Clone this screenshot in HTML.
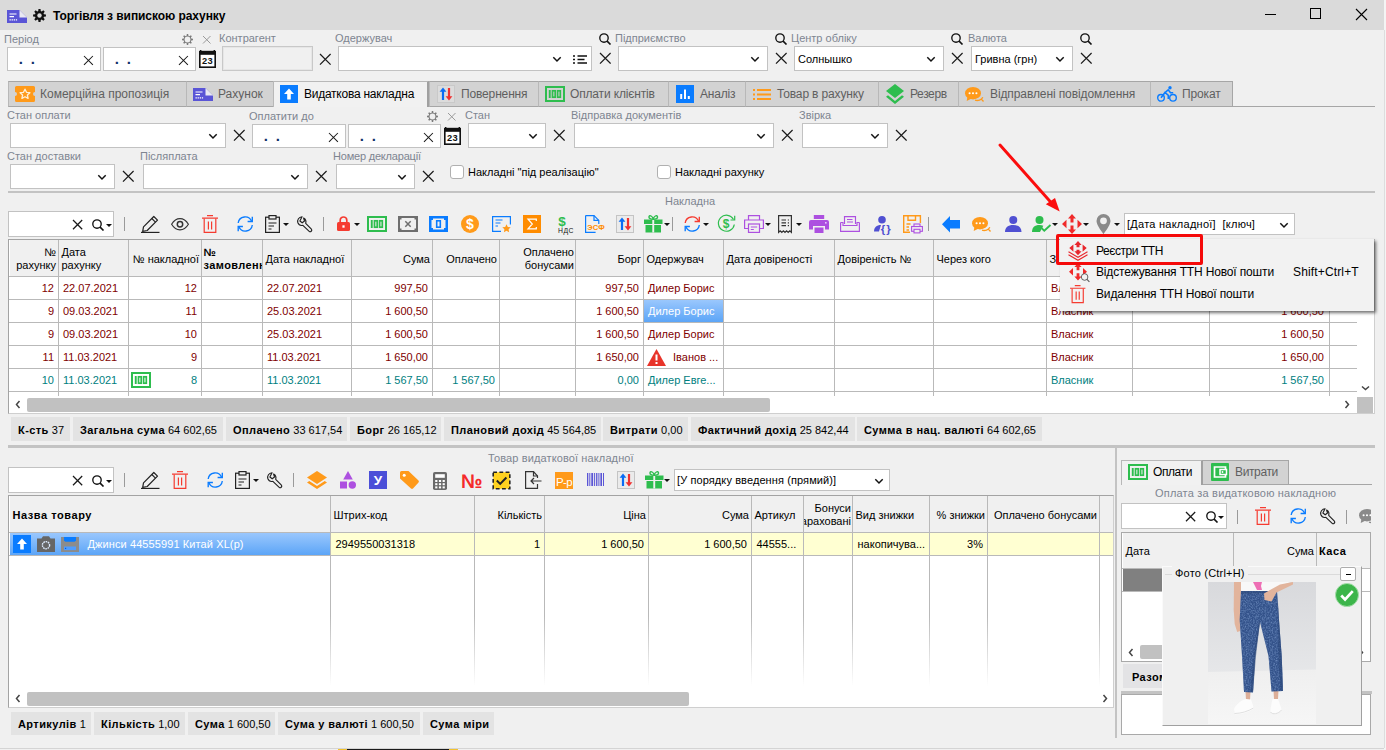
<!DOCTYPE html><html lang="uk"><head><meta charset="utf-8"><title>Торгівля з випискою рахунку</title><style>
*{box-sizing:border-box;margin:0;padding:0}
html,body{width:1386px;height:750px;overflow:hidden;background:#f0f0f0;font-family:"Liberation Sans",sans-serif;font-size:11px;color:#000}
#r{position:relative;width:1386px;height:750px;overflow:hidden}
#r div{position:absolute;white-space:nowrap}
.t{line-height:14px}
.lb{color:#7e8590;line-height:14px;font-size:11px}
.in{background:#fff;border:1px solid #c2c2c2}
.ind{background:#f0f0f0;border:1px solid #c8c8c8;box-shadow:inset 0 0 0 1px #e6e6e6}
.tab{background:#d3d3d3;border:1px solid #a6a6a6;border-left-color:#b8b8b8}
.taba{background:#f1f1f1;border:1px solid #b8b8b8;border-right:2px solid #a0a0a0;border-bottom:none}
.tt{font-size:12px;line-height:14px;color:#5f5f5f}
.ic svg{display:block;width:100%;height:100%;overflow:visible}
.g{font-size:11px;line-height:13px}
.gh{font-size:11px;line-height:13px;color:#000}
.sb{background:#e3e3e3;line-height:24px;height:24px;padding:0 7px;font-size:11px}
#r .sb b{letter-spacing:.42px}
.vl{background:#b9b9b9;width:1px}
.hl{background:#b9b9b9;height:1px}
.dot{font:bold 15px 'Liberation Sans',sans-serif;line-height:16px;color:#10306a}
</style></head><body><div id="r">
<div style="left:0px;top:0px;width:1386px;height:30px;background:#dadada"></div>
<div class="ic" style="left:7px;top:10px;width:20px;height:13px"><svg viewBox="0 0 20 13" preserveAspectRatio="none"><path d="M0 0h12.500L20 7.500V13H0z" fill="#5a55d6"/><path d="M12.500 0L20 7.500H12.500z" fill="#e9e9f2"/><path d="M2.500 4h7M2.500 6.700h4.500" stroke="#fff" stroke-width="1.200"/><path d="M2.500 9.800h8" stroke="#fff" stroke-width="1.200" stroke-dasharray="1.300 .8"/></svg></div>
<div class="ic" style="left:32.5px;top:8.5px;width:13px;height:13px"><svg viewBox="0 0 13 13" preserveAspectRatio="none"><path d="M10.92 5.22L12.92 5.48L12.92 7.52L10.92 7.78L10.53 8.72L11.76 10.32L10.32 11.76L8.72 10.53L7.78 10.92L7.52 12.92L5.48 12.92L5.22 10.92L4.28 10.53L2.68 11.76L1.24 10.32L2.47 8.72L2.08 7.78L0.08 7.52L0.08 5.48L2.08 5.22L2.47 4.28L1.24 2.68L2.68 1.24L4.28 2.47L5.22 2.08L5.48 0.08L7.52 0.08L7.78 2.08L8.72 2.47L10.32 1.24L11.76 2.68L10.53 4.28z" fill="#111"/><circle cx="6.500" cy="6.500" r="2.200" fill="#dadada"/></svg></div>
<div class="t" style="left:53px;top:8.9px;font-weight:bold;font-size:12px;letter-spacing:-0.07px">Торгівля з випискою рахунку</div>
<svg style="position:absolute;left:1250px;top:0" width="136" height="30" viewBox="0 0 136 30"><g stroke="#000" stroke-width="1" fill="none" shape-rendering="crispEdges"><path d="M14.5 14.5h11"/><rect x="60.5" y="8.5" width="10" height="10"/></g><path d="M106 9l11 11M117 9l-11 11" stroke="#000" stroke-width="1.1" fill="none"/></svg>
<div class="lb" style="left:4px;top:32px;">Період</div>
<div class="ic" style="left:182.0px;top:34.0px;width:11px;height:11px"><svg viewBox="0 0 11 11" preserveAspectRatio="none"><path d="M9.29 4.59L10.96 4.81L10.96 6.19L9.29 6.41L8.83 7.54L9.85 8.87L8.87 9.85L7.54 8.83L6.41 9.29L6.19 10.96L4.81 10.96L4.59 9.29L3.46 8.83L2.13 9.85L1.15 8.87L2.17 7.54L1.71 6.41L0.04 6.19L0.04 4.81L1.71 4.59L2.17 3.46L1.15 2.13L2.13 1.15L3.46 2.17L4.59 1.71L4.81 0.04L6.19 0.04L6.41 1.71L7.54 2.17L8.87 1.15L9.85 2.13L8.83 3.46z" fill="#7a7a7a"/><circle cx="5.500" cy="5.500" r="2.900" fill="#f0f0f0"/></svg></div>
<svg style="position:absolute;left:202.25px;top:35.25px" width="9.5" height="9.5" viewBox="-4.75 -4.75 9.5 9.5"><path d="M-3.75 -3.75L3.75 3.75M3.75 -3.75L-3.75 3.75" stroke="#9a9a9a" stroke-width="1" fill="none"/></svg>
<div class="in" style="left:7px;top:47px;width:94px;height:24px;"></div>
<div class="dot" style="left:18.7px;top:51px;">.</div>
<div class="dot" style="left:30.7px;top:51px;">.</div>
<svg style="position:absolute;left:83.14999999999999px;top:54.849999999999994px" width="10.9" height="10.9" viewBox="-5.45 -5.45 10.9 10.9"><path d="M-4.45 -4.45L4.45 4.45M4.45 -4.45L-4.45 4.45" stroke="#1a1a1a" stroke-width="1.05" fill="none"/></svg>
<div class="in" style="left:103px;top:47px;width:93px;height:24px;"></div>
<div class="dot" style="left:114.7px;top:51px;">.</div>
<div class="dot" style="left:126.7px;top:51px;">.</div>
<svg style="position:absolute;left:178.15px;top:54.849999999999994px" width="10.9" height="10.9" viewBox="-5.45 -5.45 10.9 10.9"><path d="M-4.45 -4.45L4.45 4.45M4.45 -4.45L-4.45 4.45" stroke="#1a1a1a" stroke-width="1.05" fill="none"/></svg>
<div class="ic" style="left:199px;top:50px;width:17px;height:18px"><svg viewBox="0 0 17 18" preserveAspectRatio="none"><rect x=".800" y="2" width="15.400" height="15.200" fill="#fff" stroke="#111" stroke-width="1.600"/><rect x="0" y=".800" width="17" height="4" fill="#111"/><rect x="1" y="0" width="1.400" height="2" fill="#111"/><rect x="14.600" y="0" width="1.400" height="2" fill="#111"/><text x="8.600" y="14.300" font-family="Liberation Sans,sans-serif" font-size="9.300" font-weight="bold" text-anchor="middle" fill="#111" letter-spacing=".3">23</text></svg></div>
<div class="lb" style="left:219px;top:31.200000000000003px;">Контрагент</div>
<div class="ind" style="left:222px;top:46px;width:91px;height:25px;"></div>
<svg style="position:absolute;left:319.2px;top:53.2px" width="12.6" height="12.6" viewBox="-6.3 -6.3 12.6 12.6"><path d="M-5.3 -5.3L5.3 5.3M5.3 -5.3L-5.3 5.3" stroke="#1a1a1a" stroke-width="1.25" fill="none"/></svg>
<div class="lb" style="left:335px;top:31.200000000000003px;">Одержувач</div>
<div class="in" style="left:338px;top:46px;width:254px;height:25px;"></div>
<svg style="position:absolute;left:552px;top:55.0px" width="10" height="8" viewBox="-5 -4 10 8"><path d="M-3.700 -1.700L0 2L3.700 -1.700" stroke="#111" stroke-width="1.500" fill="none"/></svg>
<svg style="position:absolute;left:598.7px;top:52.2px" width="12.6" height="12.6" viewBox="-6.3 -6.3 12.6 12.6"><path d="M-5.3 -5.3L5.3 5.3M5.3 -5.3L-5.3 5.3" stroke="#1a1a1a" stroke-width="1.25" fill="none"/></svg>
<div class="ic" style="left:573px;top:55px;width:14px;height:9px"><svg viewBox="0 0 14 9" preserveAspectRatio="none"><g stroke="#111" stroke-width="1.700"><path d="M0 1h2M4.500 1H14M0 4.500h2M4.500 4.500H11.500M0 8h2M4.500 8H14"/></g></svg></div>
<div class="ic" style="left:599.0px;top:33.1px;width:12px;height:12px"><svg viewBox="0 0 12 12" preserveAspectRatio="none"><circle cx="5" cy="5" r="4.200" fill="none" stroke="#111" stroke-width="1.350"/><path d="M8.100 8.100L11.500 11.500" stroke="#111" stroke-width="1.650"/></svg></div>
<div class="lb" style="left:615px;top:31.200000000000003px;">Підприємство</div>
<div class="in" style="left:618px;top:46px;width:150px;height:25px;"></div>
<svg style="position:absolute;left:750px;top:55.0px" width="10" height="8" viewBox="-5 -4 10 8"><path d="M-3.700 -1.700L0 2L3.700 -1.700" stroke="#111" stroke-width="1.500" fill="none"/></svg>
<svg style="position:absolute;left:774.7px;top:52.2px" width="12.6" height="12.6" viewBox="-6.3 -6.3 12.6 12.6"><path d="M-5.3 -5.3L5.3 5.3M5.3 -5.3L-5.3 5.3" stroke="#1a1a1a" stroke-width="1.25" fill="none"/></svg>
<div class="ic" style="left:775.0px;top:33.1px;width:12px;height:12px"><svg viewBox="0 0 12 12" preserveAspectRatio="none"><circle cx="5" cy="5" r="4.200" fill="none" stroke="#111" stroke-width="1.350"/><path d="M8.100 8.100L11.500 11.500" stroke="#111" stroke-width="1.650"/></svg></div>
<div class="lb" style="left:791px;top:31.200000000000003px;">Центр обліку</div>
<div class="in" style="left:794px;top:46px;width:150px;height:25px;"></div>
<div class="t" style="left:798px;top:52px;">Солнышко</div>
<svg style="position:absolute;left:926px;top:55.0px" width="10" height="8" viewBox="-5 -4 10 8"><path d="M-3.700 -1.700L0 2L3.700 -1.700" stroke="#111" stroke-width="1.500" fill="none"/></svg>
<svg style="position:absolute;left:950.7px;top:52.2px" width="12.6" height="12.6" viewBox="-6.3 -6.3 12.6 12.6"><path d="M-5.3 -5.3L5.3 5.3M5.3 -5.3L-5.3 5.3" stroke="#1a1a1a" stroke-width="1.25" fill="none"/></svg>
<div class="ic" style="left:951.0px;top:33.1px;width:12px;height:12px"><svg viewBox="0 0 12 12" preserveAspectRatio="none"><circle cx="5" cy="5" r="4.200" fill="none" stroke="#111" stroke-width="1.350"/><path d="M8.100 8.100L11.500 11.500" stroke="#111" stroke-width="1.650"/></svg></div>
<div class="lb" style="left:968px;top:31.200000000000003px;">Валюта</div>
<div class="in" style="left:971px;top:46px;width:102px;height:25px;"></div>
<div class="t" style="left:975px;top:52px;">Гривна (грн)</div>
<svg style="position:absolute;left:1055px;top:55.0px" width="10" height="8" viewBox="-5 -4 10 8"><path d="M-3.700 -1.700L0 2L3.700 -1.700" stroke="#111" stroke-width="1.500" fill="none"/></svg>
<svg style="position:absolute;left:1079.7px;top:52.2px" width="12.6" height="12.6" viewBox="-6.3 -6.3 12.6 12.6"><path d="M-5.3 -5.3L5.3 5.3M5.3 -5.3L-5.3 5.3" stroke="#1a1a1a" stroke-width="1.25" fill="none"/></svg>
<div class="ic" style="left:1080.0px;top:33.1px;width:12px;height:12px"><svg viewBox="0 0 12 12" preserveAspectRatio="none"><circle cx="5" cy="5" r="4.200" fill="none" stroke="#111" stroke-width="1.350"/><path d="M8.100 8.100L11.500 11.500" stroke="#111" stroke-width="1.650"/></svg></div>
<div style="left:8px;top:106px;width:1367px;height:1px;background:#a6a6a6"></div>
<div class="tab" style="left:8px;top:81px;width:179px;height:26px;"></div>
<div class="ic" style="left:15.0px;top:86.0px;width:20px;height:16px"><svg viewBox="0 0 20 16" preserveAspectRatio="none"><path d="M0 1.500A1.500 1.500 0 0 1 1.500 0h17A1.500 1.500 0 0 1 20 1.500V6a2 2 0 0 0 0 4v4.500a1.500 1.500 0 0 1-1.500 1.500h-17A1.500 1.500 0 0 1 0 14.500V10a2 2 0 0 0 0-4z" fill="#ff9a1a"/><path d="M10 3.200l1.500 3.100 3.400.4-2.500 2.300.7 3.400-3.100-1.700-3.100 1.700.7-3.400L5.100 6.700l3.400-.4z" fill="none" stroke="#fff0d8" stroke-width="1.300" stroke-linejoin="round"/></svg></div>
<div class="tt" style="left:40px;top:87px;">Комерційна пропозиція</div>
<div class="tab" style="left:186px;top:81px;width:88px;height:26px;"></div>
<div class="ic" style="left:193.0px;top:87.5px;width:20px;height:13px"><svg viewBox="0 0 20 13" preserveAspectRatio="none"><path d="M0 0h12.500L20 7.500V13H0z" fill="#5a55d6"/><path d="M12.500 0L20 7.500H12.500z" fill="#e9e9f2"/><path d="M2.500 4h7M2.500 6.700h4.500" stroke="#fff" stroke-width="1.200"/><path d="M2.500 9.800h8" stroke="#fff" stroke-width="1.200" stroke-dasharray="1.300 .8"/></svg></div>
<div class="tt" style="left:218px;top:87px;">Рахунок</div>
<div class="taba" style="left:273px;top:81px;width:156px;height:26px;"></div>
<div class="ic" style="left:280px;top:85.0px;width:18px;height:18px"><svg viewBox="0 0 18 18" preserveAspectRatio="none"><rect width="18" height="18" fill="#0a7cff"/><path d="M9 3.500l5 5.500h-3.200v5.500H7.200V9H4z" fill="#fff"/></svg></div>
<div class="tt" style="left:304px;top:87px;color:#000;letter-spacing:-0.25px;">Видаткова накладна</div>
<div class="tab" style="left:429px;top:81px;width:110px;height:26px;"></div>
<div class="ic" style="left:437.0px;top:85.0px;width:18px;height:18px"><svg viewBox="0 0 18 18" preserveAspectRatio="none"><rect x=".5" y=".5" width="17" height="17" fill="#dcdcdc" stroke="#c9c9c9"/><path d="M6 2.500l3.400 4.300H7.100V15H4.900V6.800H2.600z" fill="#0a6cf5"/><path d="M12 15.500l3.400-4.300h-2.300V3h-2.200v8.200H8.600z" fill="#f03030"/></svg></div>
<div class="tt" style="left:461px;top:87px;letter-spacing:-0.15px;">Повернення</div>
<div class="tab" style="left:538px;top:81px;width:131px;height:26px;"></div>
<div class="ic" style="left:545.0px;top:86.0px;width:20px;height:16px"><svg viewBox="0 0 20 16" preserveAspectRatio="none"><rect x="1" y="1" width="18" height="14" fill="none" stroke="#2ebd4e" stroke-width="2"/><rect x="3.800" y="4" width="1.900" height="8" fill="#2ebd4e"/><rect x="7.500" y="4.800" width="2.700" height="6.400" fill="none" stroke="#2ebd4e" stroke-width="1.700"/><rect x="12.600" y="4.800" width="2.700" height="6.400" fill="none" stroke="#2ebd4e" stroke-width="1.700"/></svg></div>
<div class="tt" style="left:570px;top:87px;letter-spacing:-0.16px;">Оплати клієнтів</div>
<div class="tab" style="left:668px;top:81px;width:78px;height:26px;"></div>
<div class="ic" style="left:676.0px;top:85.0px;width:18px;height:18px"><svg viewBox="0 0 18 18" preserveAspectRatio="none"><rect width="18" height="18" fill="#0a7cff"/><path d="M5.200 9v5M9 4.500v9.500M12.800 11v3" stroke="#fff" stroke-width="2"/></svg></div>
<div class="tt" style="left:700px;top:87px;letter-spacing:-0.2px;">Аналіз</div>
<div class="tab" style="left:745px;top:81px;width:134px;height:26px;"></div>
<div class="ic" style="left:753.0px;top:88.5px;width:18px;height:11px"><svg viewBox="0 0 18 11" preserveAspectRatio="none"><g stroke="#ff9a1a" stroke-width="1.900"><path d="M0 1h2M4 1H18M0 5.500h2M4 5.500H18M0 10h2M4 10H18"/></g></svg></div>
<div class="tt" style="left:777px;top:87px;letter-spacing:-0.15px;">Товар в рахунку</div>
<div class="tab" style="left:878px;top:81px;width:81px;height:26px;"></div>
<div class="ic" style="left:886.0px;top:84.0px;width:18px;height:20px"><svg viewBox="0 0 18 20" preserveAspectRatio="none"><path d="M9 0l9 7-9 7-9-7z" fill="#2ebd4e"/><path d="M2 11.200L0 12.800 9 20l9-7.200-2-1.600L9 17z" fill="#2ebd4e"/></svg></div>
<div class="tt" style="left:910px;top:87px;letter-spacing:-0.38px;">Резерв</div>
<div class="tab" style="left:958px;top:81px;width:193px;height:26px;"></div>
<div class="ic" style="left:965.0px;top:86.5px;width:20px;height:15px"><svg viewBox="0 0 20 15" preserveAspectRatio="none"><ellipse cx="8" cy="6.200" rx="8" ry="6.200" fill="#ff9a1a"/><path d="M2.500 9.500l-.8 4.500 5-2.500z" fill="#ff9a1a"/><circle cx="4.600" cy="6.200" r="1.050" fill="#fff"/><circle cx="8" cy="6.200" r="1.050" fill="#fff"/><circle cx="11.400" cy="6.200" r="1.050" fill="#fff"/><path d="M10 13.200c3 .9 6.500-.2 7.800-3M18.500 14.500l-2-2.200" fill="none" stroke="#ff9a1a" stroke-width="1.300"/></svg></div>
<div class="tt" style="left:990px;top:87px;letter-spacing:-0.1px;">Відправлені повідомлення</div>
<div class="tab" style="left:1150px;top:81px;width:83px;height:26px;"></div>
<div class="ic" style="left:1157.0px;top:86.0px;width:20px;height:16px"><svg viewBox="0 0 20 16" preserveAspectRatio="none"><circle cx="4" cy="11.800" r="3.300" fill="none" stroke="#0a7cff" stroke-width="1.400"/><circle cx="16" cy="11.800" r="3.300" fill="none" stroke="#0a7cff" stroke-width="1.400"/><path d="M4 11.800l4-5.300 3.300 2.800v3.700M8 6.500l3.200-2.700 2.300 2.900h2.700" fill="none" stroke="#0a7cff" stroke-width="1.600"/><circle cx="13" cy="1.700" r="1.700" fill="#0a7cff"/></svg></div>
<div class="tt" style="left:1182px;top:87px;letter-spacing:-0.15px;">Прокат</div>
<div class="lb" style="left:7px;top:107.7px;">Стан оплати</div>
<div class="in" style="left:10px;top:123px;width:216px;height:25px;"></div>
<svg style="position:absolute;left:208px;top:132.0px" width="10" height="8" viewBox="-5 -4 10 8"><path d="M-3.700 -1.700L0 2L3.700 -1.700" stroke="#111" stroke-width="1.500" fill="none"/></svg>
<svg style="position:absolute;left:232.7px;top:129.2px" width="12.6" height="12.6" viewBox="-6.3 -6.3 12.6 12.6"><path d="M-5.3 -5.3L5.3 5.3M5.3 -5.3L-5.3 5.3" stroke="#1a1a1a" stroke-width="1.25" fill="none"/></svg>
<div class="lb" style="left:249px;top:108.7px;">Оплатити до</div>
<div class="ic" style="left:427.0px;top:111.0px;width:11px;height:11px"><svg viewBox="0 0 11 11" preserveAspectRatio="none"><path d="M9.29 4.59L10.96 4.81L10.96 6.19L9.29 6.41L8.83 7.54L9.85 8.87L8.87 9.85L7.54 8.83L6.41 9.29L6.19 10.96L4.81 10.96L4.59 9.29L3.46 8.83L2.13 9.85L1.15 8.87L2.17 7.54L1.71 6.41L0.04 6.19L0.04 4.81L1.71 4.59L2.17 3.46L1.15 2.13L2.13 1.15L3.46 2.17L4.59 1.71L4.81 0.04L6.19 0.04L6.41 1.71L7.54 2.17L8.87 1.15L9.85 2.13L8.83 3.46z" fill="#7a7a7a"/><circle cx="5.500" cy="5.500" r="2.900" fill="#f0f0f0"/></svg></div>
<svg style="position:absolute;left:447.25px;top:112.25px" width="9.5" height="9.5" viewBox="-4.75 -4.75 9.5 9.5"><path d="M-3.75 -3.75L3.75 3.75M3.75 -3.75L-3.75 3.75" stroke="#9a9a9a" stroke-width="1" fill="none"/></svg>
<div class="in" style="left:252px;top:124px;width:94px;height:24px;"></div>
<div class="dot" style="left:263.7px;top:128px;">.</div>
<div class="dot" style="left:275.7px;top:128px;">.</div>
<svg style="position:absolute;left:328.15000000000003px;top:131.85000000000002px" width="10.9" height="10.9" viewBox="-5.45 -5.45 10.9 10.9"><path d="M-4.45 -4.45L4.45 4.45M4.45 -4.45L-4.45 4.45" stroke="#1a1a1a" stroke-width="1.05" fill="none"/></svg>
<div class="in" style="left:348px;top:124px;width:93px;height:24px;"></div>
<div class="dot" style="left:359.7px;top:128px;">.</div>
<div class="dot" style="left:371.7px;top:128px;">.</div>
<svg style="position:absolute;left:423.15000000000003px;top:131.85000000000002px" width="10.9" height="10.9" viewBox="-5.45 -5.45 10.9 10.9"><path d="M-4.45 -4.45L4.45 4.45M4.45 -4.45L-4.45 4.45" stroke="#1a1a1a" stroke-width="1.05" fill="none"/></svg>
<div class="ic" style="left:444px;top:127px;width:17px;height:18px"><svg viewBox="0 0 17 18" preserveAspectRatio="none"><rect x=".800" y="2" width="15.400" height="15.200" fill="#fff" stroke="#111" stroke-width="1.600"/><rect x="0" y=".800" width="17" height="4" fill="#111"/><rect x="1" y="0" width="1.400" height="2" fill="#111"/><rect x="14.600" y="0" width="1.400" height="2" fill="#111"/><text x="8.600" y="14.300" font-family="Liberation Sans,sans-serif" font-size="9.300" font-weight="bold" text-anchor="middle" fill="#111" letter-spacing=".3">23</text></svg></div>
<div class="lb" style="left:465px;top:107.7px;">Стан</div>
<div class="in" style="left:468px;top:123px;width:78px;height:25px;"></div>
<svg style="position:absolute;left:528px;top:132.0px" width="10" height="8" viewBox="-5 -4 10 8"><path d="M-3.700 -1.700L0 2L3.700 -1.700" stroke="#111" stroke-width="1.500" fill="none"/></svg>
<svg style="position:absolute;left:552.7px;top:129.2px" width="12.6" height="12.6" viewBox="-6.3 -6.3 12.6 12.6"><path d="M-5.3 -5.3L5.3 5.3M5.3 -5.3L-5.3 5.3" stroke="#1a1a1a" stroke-width="1.25" fill="none"/></svg>
<div class="lb" style="left:571px;top:107.7px;">Відправка документів</div>
<div class="in" style="left:574px;top:123px;width:200px;height:25px;"></div>
<svg style="position:absolute;left:756px;top:132.0px" width="10" height="8" viewBox="-5 -4 10 8"><path d="M-3.700 -1.700L0 2L3.700 -1.700" stroke="#111" stroke-width="1.500" fill="none"/></svg>
<svg style="position:absolute;left:780.7px;top:129.2px" width="12.6" height="12.6" viewBox="-6.3 -6.3 12.6 12.6"><path d="M-5.3 -5.3L5.3 5.3M5.3 -5.3L-5.3 5.3" stroke="#1a1a1a" stroke-width="1.25" fill="none"/></svg>
<div class="lb" style="left:799px;top:107.7px;">Звірка</div>
<div class="in" style="left:802px;top:123px;width:86px;height:25px;"></div>
<svg style="position:absolute;left:870px;top:132.0px" width="10" height="8" viewBox="-5 -4 10 8"><path d="M-3.700 -1.700L0 2L3.700 -1.700" stroke="#111" stroke-width="1.500" fill="none"/></svg>
<svg style="position:absolute;left:894.7px;top:129.2px" width="12.6" height="12.6" viewBox="-6.3 -6.3 12.6 12.6"><path d="M-5.3 -5.3L5.3 5.3M5.3 -5.3L-5.3 5.3" stroke="#1a1a1a" stroke-width="1.25" fill="none"/></svg>
<div class="lb" style="left:7px;top:149px;">Стан доставки</div>
<div class="in" style="left:10px;top:164px;width:105px;height:25px;"></div>
<svg style="position:absolute;left:97px;top:173.0px" width="10" height="8" viewBox="-5 -4 10 8"><path d="M-3.700 -1.700L0 2L3.700 -1.700" stroke="#111" stroke-width="1.500" fill="none"/></svg>
<svg style="position:absolute;left:121.7px;top:170.2px" width="12.6" height="12.6" viewBox="-6.3 -6.3 12.6 12.6"><path d="M-5.3 -5.3L5.3 5.3M5.3 -5.3L-5.3 5.3" stroke="#1a1a1a" stroke-width="1.25" fill="none"/></svg>
<div class="lb" style="left:140px;top:149px;">Післяплата</div>
<div class="in" style="left:143px;top:164px;width:165px;height:25px;"></div>
<svg style="position:absolute;left:290px;top:173.0px" width="10" height="8" viewBox="-5 -4 10 8"><path d="M-3.700 -1.700L0 2L3.700 -1.700" stroke="#111" stroke-width="1.500" fill="none"/></svg>
<svg style="position:absolute;left:314.7px;top:170.2px" width="12.6" height="12.6" viewBox="-6.3 -6.3 12.6 12.6"><path d="M-5.3 -5.3L5.3 5.3M5.3 -5.3L-5.3 5.3" stroke="#1a1a1a" stroke-width="1.25" fill="none"/></svg>
<div class="lb" style="left:333px;top:149px;letter-spacing:-.2px">Номер декларації</div>
<div class="in" style="left:336px;top:164px;width:79px;height:25px;"></div>
<svg style="position:absolute;left:397px;top:173.0px" width="10" height="8" viewBox="-5 -4 10 8"><path d="M-3.700 -1.700L0 2L3.700 -1.700" stroke="#111" stroke-width="1.500" fill="none"/></svg>
<svg style="position:absolute;left:421.7px;top:170.2px" width="12.6" height="12.6" viewBox="-6.3 -6.3 12.6 12.6"><path d="M-5.3 -5.3L5.3 5.3M5.3 -5.3L-5.3 5.3" stroke="#1a1a1a" stroke-width="1.25" fill="none"/></svg>
<div style="left:450px;top:165px;width:14px;height:14px;background:#fff;border:1px solid #b0b0b0;border-radius:3px"></div>
<div class="t" style="left:468px;top:165px;">Накладні "під реалізацію"</div>
<div style="left:657px;top:165px;width:14px;height:14px;background:#fff;border:1px solid #b0b0b0;border-radius:3px"></div>
<div class="t" style="left:675px;top:165px;">Накладні рахунку</div>
<div style="left:8px;top:191px;width:1367px;height:2px;background:#c3c3c3"></div>
<div class="lb" style="left:665px;top:194px;">Накладна</div>
<div class="in" style="left:8px;top:211px;width:106px;height:26px;"></div>
<svg style="position:absolute;left:72.4px;top:218.9px" width="11.2" height="11.2" viewBox="-5.6 -5.6 11.2 11.2"><path d="M-4.6 -4.6L4.6 4.6M4.6 -4.6L-4.6 4.6" stroke="#1a1a1a" stroke-width="1.25" fill="none"/></svg>
<div class="ic" style="left:92.0px;top:218.5px;width:12px;height:12px"><svg viewBox="0 0 12 12" preserveAspectRatio="none"><circle cx="5" cy="5" r="4.200" fill="none" stroke="#111" stroke-width="1.350"/><path d="M8.100 8.100L11.500 11.500" stroke="#111" stroke-width="1.650"/></svg></div>
<svg style="position:absolute;left:105.5px;top:224.0px" width="6" height="3" viewBox="0 0 6 3"><path d="M0 0h6L3 3z" fill="#111"/></svg>
<div style="left:124px;top:217px;width:1px;height:14px;background:#9a9a9a"></div>
<div class="ic" style="left:141px;top:215px;width:18.5px;height:18px"><svg viewBox="0 0 18.5 18" preserveAspectRatio="none"><path d="M2.500 11.800L12.800 1.500l3.700 3.700L6.200 15.500l-4.500.8z" fill="none" stroke="#222" stroke-width="1.200" stroke-linejoin="round"/><path d="M10.800 3.500l3.700 3.700" stroke="#222" stroke-width="1.100"/><path d="M0 17.400h18.500" stroke="#222" stroke-width="1.150"/></svg></div>
<div class="ic" style="left:171px;top:217.8px;width:18px;height:12.5px"><svg viewBox="0 0 18 12.5" preserveAspectRatio="none"><path d="M.6 6.250C3 2.300 5.800.6 9 .6s6 1.700 8.400 5.650C15 10.200 12.200 11.900 9 11.900S3 10.200.6 6.250z" fill="none" stroke="#333" stroke-width="1.150"/><circle cx="9" cy="6.250" r="2.700" fill="none" stroke="#333" stroke-width="1.500"/></svg></div>
<div class="ic" style="left:202px;top:214.8px;width:16px;height:18px"><svg viewBox="0 0 16 18" preserveAspectRatio="none"><path d="M0 3.200h16M5 .600h6" fill="none" stroke="#f53b30" stroke-width="1.200"/><path d="M2.200 3.500v13.900h11.600V3.500" fill="none" stroke="#f53b30" stroke-width="1.200"/><path d="M6.400 6.500v8M9.600 6.500v8" stroke="#f53b30" stroke-width="1.200"/></svg></div>
<div class="ic" style="left:236.8px;top:216px;width:16.5px;height:16px"><svg viewBox="0 0 16.5 16" preserveAspectRatio="none"><path d="M1.200 7A7 7 0 0 1 14.600 5.200" fill="none" stroke="#0a7cff" stroke-width="1.350"/><path d="M15.300 .8v4.700h-4.700" fill="none" stroke="#0a7cff" stroke-width="1.350"/><path d="M15.300 9A7 7 0 0 1 1.900 10.800" fill="none" stroke="#0a7cff" stroke-width="1.350"/><path d="M1.200 15.200v-4.700h4.700" fill="none" stroke="#0a7cff" stroke-width="1.350"/></svg></div>
<div class="ic" style="left:264.7px;top:215px;width:15px;height:18px"><svg viewBox="0 0 15 18" preserveAspectRatio="none"><rect x=".6" y="2.200" width="13.800" height="15.200" fill="none" stroke="#222" stroke-width="1.200"/><rect x="4" y=".600" width="7" height="3.400" fill="#f0f0f0" stroke="#222" stroke-width="1.200"/><path d="M3.500 8h8M3.500 11h5.500M3.500 14h3" stroke="#222" stroke-width="1.150"/></svg></div>
<div class="ic" style="left:296.8px;top:216px;width:16.5px;height:16px"><svg viewBox="0 0 16.5 16" preserveAspectRatio="none"><path d="M5 .700A4.600 4.600 0 0 0 .9 6.800c.8 2 3 3 5 2.500l6.300 6c1.300 1.200 3.400-.7 2.200-2.100L8.700 7.300c.6-2.100-.3-4.200-2.100-5.200l.9 2.900-2.300 1.800-2.300-1.800z" fill="none" stroke="#222" stroke-width="1.150" stroke-linejoin="round"/></svg></div>
<div class="ic" style="left:336.5px;top:216px;width:13px;height:15px"><svg viewBox="0 0 13 15" preserveAspectRatio="none"><path d="M3.200 6.500V4.300a3.300 3.300 0 0 1 6.600 0v2.200" fill="none" stroke="#f53b30" stroke-width="1.700"/><rect x="0" y="6" width="13" height="9" rx="1.500" fill="#f53b30"/><rect x="5.400" y="9.300" width="2.200" height="2.400" fill="#fff"/></svg></div>
<div class="ic" style="left:367px;top:216px;width:20px;height:16px"><svg viewBox="0 0 20 16" preserveAspectRatio="none"><rect x="1" y="1" width="18" height="14" fill="none" stroke="#2ebd4e" stroke-width="2"/><rect x="3.800" y="4" width="1.900" height="8" fill="#2ebd4e"/><rect x="7.500" y="4.800" width="2.700" height="6.400" fill="none" stroke="#2ebd4e" stroke-width="1.700"/><rect x="12.600" y="4.800" width="2.700" height="6.400" fill="none" stroke="#2ebd4e" stroke-width="1.700"/></svg></div>
<div class="ic" style="left:398px;top:216px;width:20px;height:16px"><svg viewBox="0 0 20 16" preserveAspectRatio="none"><path d="M0 0h20v16H0z M2 3.500v9h1.500V14h13v-1.500H18v-9h-1.500V2h-13v1.500z" fill="#6e6e6e" fill-rule="evenodd"/><path d="M7.300 5.300l5.400 5.400M12.700 5.300l-5.400 5.400" stroke="#6e6e6e" stroke-width="1.500"/></svg></div>
<div class="ic" style="left:429px;top:216px;width:19px;height:16px"><svg viewBox="0 0 19 16" preserveAspectRatio="none"><path d="M0 0h19v16H0z M2.500 4v8h1.500v1.500h11V12h1.500V4H15V2.500H4V4z" fill="#0a7cff" fill-rule="evenodd"/><rect x="7.700" y="4.800" width="3.600" height="6.400" fill="none" stroke="#0a7cff" stroke-width="1.600"/></svg></div>
<div class="ic" style="left:461px;top:215px;width:18px;height:18px"><svg viewBox="0 0 18 18" preserveAspectRatio="none"><circle cx="9" cy="9" r="9" fill="#ff9a1a"/><text x="9" y="14" font-family="Liberation Sans,sans-serif" font-size="14" font-weight="bold" text-anchor="middle" fill="#fff">$</text></svg></div>
<div class="ic" style="left:491.7px;top:216px;width:19px;height:16px"><svg viewBox="0 0 19 16" preserveAspectRatio="none"><path d="M18.400 8.500V.600H.600v14.800H9" fill="none" stroke="#0a7cff" stroke-width="1.200"/><path d="M3.500 4h7M3.500 7h5M3.500 10h2.500" stroke="#0a7cff" stroke-width="1.200"/><path d="M14.500 8.200l1.300 2.700 2.900.4-2.100 2 .5 2.900-2.600-1.400-2.600 1.400.5-2.900-2.100-2 2.900-.4z" fill="#ff9a1a"/></svg></div>
<div class="ic" style="left:523px;top:215px;width:18px;height:18px"><svg viewBox="0 0 18 18" preserveAspectRatio="none"><rect width="18" height="18" fill="#ff8c00"/><path d="M13.300 6V4.200H5L9.300 9 5 13.800h8.300V12" fill="none" stroke="#fff" stroke-width="1.200"/></svg></div>
<div class="ic" style="left:556px;top:215px;width:18px;height:18px"><svg viewBox="0 0 18 18" preserveAspectRatio="none"><text x="6" y="11" font-family="Liberation Sans,sans-serif" font-size="13.500" font-weight="bold" text-anchor="middle" fill="#2ebd4e">$</text><text x="10" y="17.600" font-family="Liberation Sans,sans-serif" font-size="6.800" text-anchor="middle" fill="#111" letter-spacing=".5">НДС</text></svg></div>
<div class="ic" style="left:585px;top:215px;width:19px;height:18px"><svg viewBox="0 0 19 18" preserveAspectRatio="none"><path d="M.6 .600h8.400l4.800 4.800V9M.6 .600v16.800h10" fill="none" stroke="#0a7cff" stroke-width="1.200"/><path d="M9 .600v4.800h4.800" fill="none" stroke="#0a7cff" stroke-width="1.200"/><text x="11" y="14.800" font-family="Liberation Sans,sans-serif" font-size="7.600" font-weight="bold" text-anchor="middle" fill="#ff8c00">ЭСФ</text></svg></div>
<div class="ic" style="left:616px;top:215px;width:18px;height:18px"><svg viewBox="0 0 18 18" preserveAspectRatio="none"><rect x=".5" y=".5" width="17" height="17" fill="#ebebeb" stroke="#c4c4c4"/><path d="M6 2.500l3.400 4.300H7.100V15H4.900V6.800H2.600z" fill="#0a6cf5"/><path d="M12 15.500l3.400-4.300h-2.300V3h-2.200v8.200H8.600z" fill="#f03030"/></svg></div>
<div class="ic" style="left:643.8px;top:215.3px;width:18.5px;height:17.5px"><svg viewBox="0 0 18.5 17.5" preserveAspectRatio="none"><rect x="0" y="4.500" width="18.500" height="4.500" fill="#2ebd4e"/><rect x="1.500" y="10" width="15.500" height="7.500" fill="#2ebd4e"/><rect x="8.300" y="4.500" width="1.900" height="13" fill="#f0f0f0"/><path d="M9.250 4.300C7 4.300 4.500 3.500 5 1.600s3.700-.6 4.250 2.700C9.800 1 12.900-.3 13.500 1.600S11.500 4.300 9.250 4.300z" fill="none" stroke="#2ebd4e" stroke-width="1.400"/></svg></div>
<div class="ic" style="left:683.8px;top:216px;width:16.5px;height:16px"><svg viewBox="0 0 16.5 16" preserveAspectRatio="none"><path d="M1.200 7A7 7 0 0 1 14.600 5.200" fill="none" stroke="#f53b30" stroke-width="1.350"/><path d="M15.300 .8v4.700h-4.700" fill="none" stroke="#f53b30" stroke-width="1.350"/><path d="M15.300 9A7 7 0 0 1 1.900 10.800" fill="none" stroke="#0a7cff" stroke-width="1.350"/><path d="M1.200 15.200v-4.700h4.700" fill="none" stroke="#0a7cff" stroke-width="1.350"/></svg></div>
<div class="ic" style="left:717px;top:215.3px;width:18.5px;height:17.5px"><svg viewBox="0 0 18.5 17.5" preserveAspectRatio="none"><path d="M16.500 4.500A8 8 0 1 0 17.300 9.500" fill="none" stroke="#2ebd4e" stroke-width="1.200"/><path d="M17.700 .800v4.200h-4.200" fill="none" stroke="#2ebd4e" stroke-width="1.200"/><text x="9" y="13.300" font-family="Liberation Sans,sans-serif" font-size="12" font-weight="bold" text-anchor="middle" fill="#2ebd4e">$</text></svg></div>
<div class="ic" style="left:744px;top:215px;width:20px;height:18px"><svg viewBox="0 0 20 18" preserveAspectRatio="none"><path d="M4.500 5V.600h11V5" fill="none" stroke="#ad50e0" stroke-width="1.200"/><path d="M4.500 13.500H.600V5h18.800v8.500h-3.900" fill="none" stroke="#ad50e0" stroke-width="1.200"/><rect x="4.500" y="9" width="11" height="8.400" fill="none" stroke="#ad50e0" stroke-width="1.200"/><path d="M6.800 12h6.400M6.800 14.500h3" stroke="#ad50e0" stroke-width="1.100"/></svg></div>
<div class="ic" style="left:778px;top:215px;width:14px;height:18px"><svg viewBox="0 0 14 18" preserveAspectRatio="none"><path d="M.6 .600h12.800v16.800l-1.600-1.600-1.600 1.600-1.600-1.600-1.600 1.600-1.600-1.600-1.600 1.600-1.600-1.600-1.600 1.600z" fill="none" stroke="#333" stroke-width="1.200"/><path d="M3.500 5h4.500M3.500 7.800h4.500M3.500 10.600h4.500M9.800 7.800h1.200M9.800 10.600h1.200M9.800 5h1.200" stroke="#333" stroke-width="1.200"/></svg></div>
<div class="ic" style="left:809px;top:215px;width:20px;height:18px"><svg viewBox="0 0 20 18" preserveAspectRatio="none"><rect x="4.800" y="0" width="10.400" height="4" fill="#ad50e0"/><path d="M2 5h16a2 2 0 0 1 2 2v7.500h-4V11H4v3.500H0V7a2 2 0 0 1 2-2z" fill="#ad50e0"/><rect x="5.500" y="12.500" width="9" height="5.500" fill="#ad50e0"/><rect x="16" y="7" width="1.600" height="1.600" fill="#e8c8ff"/></svg></div>
<div class="ic" style="left:840px;top:216px;width:20px;height:16px"><svg viewBox="0 0 20 16" preserveAspectRatio="none"><path d="M4.500 8V.600h11V8" fill="none" stroke="#ad50e0" stroke-width="1.150"/><path d="M7 3.500h5.500M7 6h6" stroke="#ad50e0" stroke-width="1.100"/><path d="M.6 6.500v8.900h18.800V6.500" fill="none" stroke="#ad50e0" stroke-width="1.150"/><path d="M.6 6.500h2.400v3h14v-3h2.400" fill="none" stroke="#ad50e0" stroke-width="1.150"/></svg></div>
<div class="ic" style="left:873.8px;top:216px;width:18px;height:18.5px"><svg viewBox="0 0 18 18.5" preserveAspectRatio="none"><circle cx="8" cy="3.800" r="3.800" fill="#5050d2"/><path d="M0 15.500c0-4 2.500-6.500 7-6.500l-2 6.500z" fill="#5050d2"/><text x="12.300" y="17.300" font-family="Liberation Sans,sans-serif" font-size="11.500" font-weight="bold" text-anchor="middle" fill="#5050d2" letter-spacing="1">{}</text></svg></div>
<div class="ic" style="left:903px;top:215px;width:20px;height:18.5px"><svg viewBox="0 0 20 18.5" preserveAspectRatio="none"><path d="M17.400 8V.700H.700v16.600H7" fill="none" stroke="#ff9a1a" stroke-width="1.400"/><path d="M5 .700v4.500h7.500V.700" fill="none" stroke="#ff9a1a" stroke-width="1.400"/><path d="M3.500 9h4M3.500 12h2.500M3.500 15h2.500" stroke="#ff9a1a" stroke-width="1.500"/><rect x="8.600" y="11.500" width="10.800" height="4.800" fill="#f0f0f0" stroke="#ad50e0" stroke-width="1.100"/><rect x="11" y="9" width="6" height="2.500" fill="#f0f0f0" stroke="#ad50e0" stroke-width="1.100"/><rect x="11" y="14.300" width="6" height="3.600" fill="#f0f0f0" stroke="#ad50e0" stroke-width="1.100"/></svg></div>
<div class="ic" style="left:942px;top:215.7px;width:18px;height:16.5px"><svg viewBox="0 0 18 16.5" preserveAspectRatio="none"><path d="M0 8.250L8 0v4h10v8.500H8v4z" fill="#0a7cff"/></svg></div>
<div class="ic" style="left:972px;top:217px;width:20px;height:15px"><svg viewBox="0 0 20 15" preserveAspectRatio="none"><ellipse cx="8" cy="6.200" rx="8" ry="6.200" fill="#ff9a1a"/><path d="M2.500 9.500l-.8 4.500 5-2.500z" fill="#ff9a1a"/><circle cx="4.600" cy="6.200" r="1.050" fill="#fff"/><circle cx="8" cy="6.200" r="1.050" fill="#fff"/><circle cx="11.400" cy="6.200" r="1.050" fill="#fff"/><path d="M10 13.200c3 .9 6.500-.2 7.800-3M18.500 14.500l-2-2.200" fill="none" stroke="#ff9a1a" stroke-width="1.300"/></svg></div>
<div class="ic" style="left:1005px;top:216px;width:16.5px;height:16px"><svg viewBox="0 0 16.5 16" preserveAspectRatio="none"><circle cx="8.250" cy="4" r="4" fill="#5050d2"/><path d="M0 16c0-4.500 3-7 8.250-7s8.250 2.500 8.250 7z" fill="#5050d2"/></svg></div>
<div class="ic" style="left:1031.8px;top:216px;width:19px;height:16px"><svg viewBox="0 0 19 16" preserveAspectRatio="none"><circle cx="7.500" cy="4" r="4" fill="#2ebd4e"/><path d="M0 16c0-4.500 2.500-7 7.500-7 1.500 0 2.800.3 3.800.8L8 16z" fill="#2ebd4e"/><path d="M9.500 12l2.800 2.800L18.500 9" fill="none" stroke="#2ebd4e" stroke-width="1.900"/></svg></div>
<div class="ic" style="left:1062px;top:214px;width:20px;height:20px"><svg viewBox="0 0 20 20" preserveAspectRatio="none"><path d="M10 0l4 4.500h-2.500V8.500h-3V4.500H6z M10 20l4-4.500h-2.500V11.500h-3v4H6z M0 10l4.500-4.200v8.400z M20 10l-4.500-4.200v8.400z" fill="#f02a2a"/></svg></div>
<div class="ic" style="left:1095.6px;top:214px;width:15px;height:20px"><svg viewBox="0 0 15 20" preserveAspectRatio="none"><path d="M7.500 0A7 7 0 0 0 .500 7c0 4.500 7 13 7 13s7-8.500 7-13A7 7 0 0 0 7.500 0z" fill="#8a8a8a"/><circle cx="7.500" cy="6.800" r="3.400" fill="#f0f0f0"/></svg></div>
<svg style="position:absolute;left:282.6px;top:223.0px" width="6" height="3" viewBox="0 0 6 3"><path d="M0 0h6L3 3z" fill="#111"/></svg>
<svg style="position:absolute;left:353.5px;top:223.0px" width="6" height="3" viewBox="0 0 6 3"><path d="M0 0h6L3 3z" fill="#111"/></svg>
<svg style="position:absolute;left:663.5px;top:223.0px" width="6" height="3" viewBox="0 0 6 3"><path d="M0 0h6L3 3z" fill="#111"/></svg>
<svg style="position:absolute;left:702.5px;top:223.0px" width="6" height="3" viewBox="0 0 6 3"><path d="M0 0h6L3 3z" fill="#111"/></svg>
<svg style="position:absolute;left:764.7px;top:223.0px" width="6" height="3" viewBox="0 0 6 3"><path d="M0 0h6L3 3z" fill="#111"/></svg>
<svg style="position:absolute;left:795.5px;top:223.0px" width="6" height="3" viewBox="0 0 6 3"><path d="M0 0h6L3 3z" fill="#111"/></svg>
<svg style="position:absolute;left:1051.5px;top:223.0px" width="6" height="3" viewBox="0 0 6 3"><path d="M0 0h6L3 3z" fill="#111"/></svg>
<svg style="position:absolute;left:1082.5px;top:223.0px" width="6" height="3" viewBox="0 0 6 3"><path d="M0 0h6L3 3z" fill="#111"/></svg>
<svg style="position:absolute;left:1113.7px;top:223.0px" width="6" height="3" viewBox="0 0 6 3"><path d="M0 0h6L3 3z" fill="#111"/></svg>
<div style="left:323px;top:217px;width:1px;height:14px;background:#9a9a9a"></div>
<div style="left:672px;top:217px;width:1px;height:14px;background:#9a9a9a"></div>
<div style="left:928px;top:217px;width:1px;height:14px;background:#9a9a9a"></div>
<div class="in" style="left:1124px;top:213px;width:171px;height:22px;"></div>
<svg style="position:absolute;left:1279px;top:220.5px" width="10" height="8" viewBox="-5 -4 10 8"><path d="M-3.700 -1.700L0 2L3.700 -1.700" stroke="#111" stroke-width="1.500" fill="none"/></svg>
<div class="t" style="left:1127px;top:217px;letter-spacing:.25px">[Дата накладної]&nbsp; [ключ]</div>
<div style="left:8px;top:239px;width:1367px;height:175px;background:#fff;border:1px solid #a3a3a3;border-right-color:#cfcfcf;border-bottom-color:#cfcfcf"></div>
<div style="left:10px;top:240px;width:1364px;height:36px;background:#f0f0f0"></div>
<div class="hl" style="left:9px;top:276px;width:1365px;height:1px;"></div>
<div class="hl" style="left:9px;top:299px;width:1348px;height:1px;"></div>
<div class="hl" style="left:9px;top:322px;width:1348px;height:1px;"></div>
<div class="hl" style="left:9px;top:345px;width:1348px;height:1px;"></div>
<div class="hl" style="left:9px;top:368px;width:1348px;height:1px;"></div>
<div class="hl" style="left:9px;top:391px;width:1348px;height:1px;"></div>
<div class="vl" style="left:58px;top:240px;width:1px;height:155.5px;"></div>
<div class="vl" style="left:128px;top:240px;width:1px;height:155.5px;"></div>
<div class="vl" style="left:201px;top:240px;width:1px;height:155.5px;"></div>
<div class="vl" style="left:262px;top:240px;width:1px;height:155.5px;"></div>
<div class="vl" style="left:351px;top:240px;width:1px;height:155.5px;"></div>
<div class="vl" style="left:432px;top:240px;width:1px;height:155.5px;"></div>
<div class="vl" style="left:499px;top:240px;width:1px;height:155.5px;"></div>
<div class="vl" style="left:575px;top:240px;width:1px;height:155.5px;"></div>
<div class="vl" style="left:643px;top:240px;width:1px;height:155.5px;"></div>
<div class="vl" style="left:723px;top:240px;width:1px;height:155.5px;"></div>
<div class="vl" style="left:834px;top:240px;width:1px;height:155.5px;"></div>
<div class="vl" style="left:933px;top:240px;width:1px;height:155.5px;"></div>
<div class="vl" style="left:1046px;top:240px;width:1px;height:155.5px;"></div>
<div class="vl" style="left:1132px;top:240px;width:1px;height:155.5px;"></div>
<div class="vl" style="left:1209px;top:240px;width:1px;height:155.5px;"></div>
<div class="vl" style="left:1329px;top:240px;width:1px;height:155.5px;"></div>
<div class="gh" style="right:1330px;top:246px;text-align:right;">№<br>рахунку</div>
<div class="gh" style="left:61.5px;top:246px;">Дата<br>рахунку</div>
<div class="gh" style="right:1187px;top:252.5px;text-align:right;">№ накладної</div>
<div style="left:202px;top:240px;width:60px;height:36px;overflow:hidden"><div class="gh" style="left:1.500px;top:6px;font-weight:bold;letter-spacing:.4px">№<br>замовлення</div></div>
<div class="gh" style="left:265.5px;top:252.5px;">Дата накладної</div>
<div class="gh" style="right:956px;top:252.5px;text-align:right;">Сума</div>
<div class="gh" style="right:889px;top:252.5px;text-align:right;">Оплачено</div>
<div class="gh" style="right:812px;top:246px;text-align:right;">Оплачено<br>бонусами</div>
<div class="gh" style="right:745px;top:252.5px;text-align:right;">Борг</div>
<div class="gh" style="left:646.5px;top:252.5px;">Одержувач</div>
<div class="gh" style="left:726.5px;top:252.5px;">Дата довіреності</div>
<div class="gh" style="left:837.5px;top:252.5px;">Довіреність №</div>
<div class="gh" style="left:936.5px;top:252.5px;">Через кого</div>
<div class="gh" style="left:1049.5px;top:252.5px;">З</div>
<div class="g" style="right:1332px;top:282px;color:#800000">12</div>
<div class="g" style="left:63px;top:282px;color:#800000">22.07.2021</div>
<div class="g" style="right:1189px;top:282px;color:#800000">12</div>
<div class="g" style="left:267px;top:282px;color:#800000">22.07.2021</div>
<div class="g" style="right:958px;top:282px;color:#800000">997,50</div>
<div class="g" style="right:891px;top:282px;color:#800000"></div>
<div class="g" style="right:747px;top:282px;color:#800000">997,50</div>
<div class="g" style="left:648px;top:282px;color:#800000">Дилер Борис</div>
<div class="g" style="left:1051px;top:282px;color:#800000">Власник</div>
<div class="g" style="right:62px;top:282px;color:#800000">997,50</div>
<div class="g" style="right:1332px;top:305px;color:#800000">9</div>
<div class="g" style="left:63px;top:305px;color:#800000">09.03.2021</div>
<div class="g" style="right:1189px;top:305px;color:#800000">11</div>
<div class="g" style="left:267px;top:305px;color:#800000">25.03.2021</div>
<div class="g" style="right:958px;top:305px;color:#800000">1 600,50</div>
<div class="g" style="right:891px;top:305px;color:#800000"></div>
<div class="g" style="right:747px;top:305px;color:#800000">1 600,50</div>
<div style="left:644px;top:300px;width:79px;height:22px;background:linear-gradient(#9ac7fd,#5ca5f7)"></div>
<div class="g" style="left:648px;top:305px;color:#fff">Дилер Борис</div>
<div class="g" style="left:1051px;top:305px;color:#800000">Власник</div>
<div class="g" style="right:62px;top:305px;color:#800000">1 600,50</div>
<div class="g" style="right:1332px;top:328px;color:#800000">9</div>
<div class="g" style="left:63px;top:328px;color:#800000">09.03.2021</div>
<div class="g" style="right:1189px;top:328px;color:#800000">10</div>
<div class="g" style="left:267px;top:328px;color:#800000">25.03.2021</div>
<div class="g" style="right:958px;top:328px;color:#800000">1 600,50</div>
<div class="g" style="right:891px;top:328px;color:#800000"></div>
<div class="g" style="right:747px;top:328px;color:#800000">1 600,50</div>
<div class="g" style="left:648px;top:328px;color:#800000">Дилер Борис</div>
<div class="g" style="left:1051px;top:328px;color:#800000">Власник</div>
<div class="g" style="right:62px;top:328px;color:#800000">1 600,50</div>
<div class="g" style="right:1332px;top:351px;color:#800000">11</div>
<div class="g" style="left:63px;top:351px;color:#800000">11.03.2021</div>
<div class="g" style="right:1189px;top:351px;color:#800000">9</div>
<div class="g" style="left:267px;top:351px;color:#800000">11.03.2021</div>
<div class="g" style="right:958px;top:351px;color:#800000">1 650,00</div>
<div class="g" style="right:891px;top:351px;color:#800000"></div>
<div class="g" style="right:747px;top:351px;color:#800000">1 650,00</div>
<div class="ic" style="left:646.5px;top:348.5px;width:19px;height:17px"><svg viewBox="0 0 19 17" preserveAspectRatio="none"><path d="M9.500 0L19 17H0z" fill="#e8342a"/><rect x="8.500" y="5.500" width="2" height="6" fill="#fff"/><rect x="8.500" y="13" width="2" height="2" fill="#fff"/></svg></div>
<div class="g" style="left:670px;top:351px;color:#800000">&nbsp;Іванов ...</div>
<div class="g" style="left:1051px;top:351px;color:#800000">Власник</div>
<div class="g" style="right:62px;top:351px;color:#800000">1 650,00</div>
<div class="g" style="right:1332px;top:374px;color:#008080">10</div>
<div class="g" style="left:63px;top:374px;color:#008080">11.03.2021</div>
<div class="g" style="right:1189px;top:374px;color:#008080">8</div>
<div class="g" style="left:267px;top:374px;color:#008080">11.03.2021</div>
<div class="g" style="right:958px;top:374px;color:#008080">1 567,50</div>
<div class="g" style="right:891px;top:374px;color:#008080">1 567,50</div>
<div class="g" style="right:747px;top:374px;color:#008080">0,00</div>
<div class="g" style="left:648px;top:374px;color:#008080">Дилер Евге...</div>
<div class="g" style="left:1051px;top:374px;color:#008080">Власник</div>
<div class="g" style="right:62px;top:374px;color:#008080">1 567,50</div>
<div class="ic" style="left:131px;top:372px;width:20px;height:16px"><svg viewBox="0 0 20 16" preserveAspectRatio="none"><rect x="1" y="1" width="18" height="14" fill="none" stroke="#2ebd4e" stroke-width="2"/><rect x="3.800" y="4" width="1.900" height="8" fill="#2ebd4e"/><rect x="7.500" y="4.800" width="2.700" height="6.400" fill="none" stroke="#2ebd4e" stroke-width="1.700"/><rect x="12.600" y="4.800" width="2.700" height="6.400" fill="none" stroke="#2ebd4e" stroke-width="1.700"/></svg></div>
<div style="left:9px;top:396px;width:1365px;height:17px;background:#fff"></div>
<div style="left:27px;top:398px;width:743px;height:14px;background:#c1c1c1;border-radius:2px"></div>
<svg style="position:absolute;left:15px;top:400px" width="6" height="9" viewBox="0 0 6 9"><path d="M4.500 1L1.500 4.500L4.500 8" stroke="#444" stroke-width="1.500" fill="none"/></svg>
<svg style="position:absolute;left:1344px;top:400px" width="6" height="9" viewBox="0 0 6 9"><path d="M1.500 1L4.500 4.500L1.500 8" stroke="#444" stroke-width="1.500" fill="none"/></svg>
<div style="left:1357px;top:240px;width:17px;height:156px;background:#fff"></div>
<div style="left:1357px;top:397px;width:16px;height:16px;background:#c1c1c1"></div>
<svg style="position:absolute;left:1361px;top:385px" width="9" height="6" viewBox="0 0 9 6"><path d="M1 1.500L4.500 4.500L8 1.500" stroke="#444" stroke-width="1.500" fill="none"/></svg>
<div class="sb" style="left:11px;top:417px;width:59px;height:24px;line-height:26.5px"><b>К-сть</b> 37</div>
<div class="sb" style="left:73px;top:417px;width:150px;height:24px;line-height:26.5px"><b>Загальна сума</b> 64 602,65</div>
<div class="sb" style="left:226px;top:417px;width:121px;height:24px;line-height:26.5px"><b>Оплачено</b> 33 617,54</div>
<div class="sb" style="left:350px;top:417px;width:91px;height:24px;line-height:26.5px"><b>Борг</b> 26 165,12</div>
<div class="sb" style="left:444px;top:417px;width:157px;height:24px;line-height:26.5px"><b>Плановий дохід</b> 45 564,85</div>
<div class="sb" style="left:603px;top:417px;width:85px;height:24px;line-height:26.5px"><b>Витрати</b> 0,00</div>
<div class="sb" style="left:691px;top:417px;width:164px;height:24px;line-height:26.5px"><b>Фактичний дохід</b> 25 842,44</div>
<div class="sb" style="left:857px;top:417px;width:185px;height:24px;line-height:26.5px"><b>Сумма в нац. валюті</b> 64 602,65</div>
<div style="left:8px;top:445px;width:1367px;height:3px;background:#c3c3c3"></div>
<div class="lb" style="left:488px;top:450.5px;letter-spacing:.12px">Товар видаткової накладної</div>
<div class="in" style="left:8px;top:467px;width:106px;height:26px;"></div>
<svg style="position:absolute;left:72.4px;top:474.9px" width="11.2" height="11.2" viewBox="-5.6 -5.6 11.2 11.2"><path d="M-4.6 -4.6L4.6 4.6M4.6 -4.6L-4.6 4.6" stroke="#1a1a1a" stroke-width="1.25" fill="none"/></svg>
<div class="ic" style="left:92.0px;top:474.5px;width:12px;height:12px"><svg viewBox="0 0 12 12" preserveAspectRatio="none"><circle cx="5" cy="5" r="4.200" fill="none" stroke="#111" stroke-width="1.350"/><path d="M8.100 8.100L11.500 11.500" stroke="#111" stroke-width="1.650"/></svg></div>
<svg style="position:absolute;left:105.5px;top:480.0px" width="6" height="3" viewBox="0 0 6 3"><path d="M0 0h6L3 3z" fill="#111"/></svg>
<div class="ic" style="left:141px;top:471px;width:18.5px;height:18px"><svg viewBox="0 0 18.5 18" preserveAspectRatio="none"><path d="M2.500 11.800L12.800 1.500l3.700 3.700L6.200 15.500l-4.500.8z" fill="none" stroke="#222" stroke-width="1.200" stroke-linejoin="round"/><path d="M10.800 3.500l3.700 3.700" stroke="#222" stroke-width="1.100"/><path d="M0 17.400h18.500" stroke="#222" stroke-width="1.150"/></svg></div>
<div class="ic" style="left:172px;top:470.8px;width:16px;height:18px"><svg viewBox="0 0 16 18" preserveAspectRatio="none"><path d="M0 3.200h16M5 .600h6" fill="none" stroke="#f53b30" stroke-width="1.200"/><path d="M2.200 3.500v13.900h11.600V3.500" fill="none" stroke="#f53b30" stroke-width="1.200"/><path d="M6.400 6.500v8M9.600 6.500v8" stroke="#f53b30" stroke-width="1.200"/></svg></div>
<div class="ic" style="left:206.7px;top:472px;width:16.5px;height:16px"><svg viewBox="0 0 16.5 16" preserveAspectRatio="none"><path d="M1.200 7A7 7 0 0 1 14.600 5.200" fill="none" stroke="#0a7cff" stroke-width="1.350"/><path d="M15.300 .8v4.700h-4.700" fill="none" stroke="#0a7cff" stroke-width="1.350"/><path d="M15.300 9A7 7 0 0 1 1.900 10.800" fill="none" stroke="#0a7cff" stroke-width="1.350"/><path d="M1.200 15.200v-4.700h4.700" fill="none" stroke="#0a7cff" stroke-width="1.350"/></svg></div>
<div class="ic" style="left:234.6px;top:471px;width:15px;height:18px"><svg viewBox="0 0 15 18" preserveAspectRatio="none"><rect x=".6" y="2.200" width="13.800" height="15.200" fill="none" stroke="#222" stroke-width="1.200"/><rect x="4" y=".600" width="7" height="3.400" fill="#f0f0f0" stroke="#222" stroke-width="1.200"/><path d="M3.500 8h8M3.500 11h5.500M3.500 14h3" stroke="#222" stroke-width="1.150"/></svg></div>
<div class="ic" style="left:266.7px;top:472px;width:16.5px;height:16px"><svg viewBox="0 0 16.5 16" preserveAspectRatio="none"><path d="M5 .700A4.600 4.600 0 0 0 .9 6.800c.8 2 3 3 5 2.500l6.300 6c1.300 1.200 3.400-.7 2.200-2.100L8.700 7.300c.6-2.100-.3-4.200-2.100-5.200l.9 2.900-2.300 1.800-2.300-1.800z" fill="none" stroke="#222" stroke-width="1.150" stroke-linejoin="round"/></svg></div>
<div class="ic" style="left:307px;top:470.5px;width:20px;height:18px"><svg viewBox="0 0 20 18" preserveAspectRatio="none"><path d="M10 0l10 6.500-10 6.500L0 6.500z" fill="#ff9a1a"/><path d="M2.300 10L0 11.500 10 18l10-6.500-2.300-1.500L10 15z" fill="#ff9a1a"/></svg></div>
<div class="ic" style="left:338.6px;top:471px;width:18px;height:18px"><svg viewBox="0 0 18 18" preserveAspectRatio="none"><path d="M9 0l4.800 8.500H4.200z" fill="#ad50e0"/><rect x="1" y="10.500" width="7" height="7" fill="#ad50e0"/><circle cx="13.300" cy="14" r="3.700" fill="#ad50e0"/></svg></div>
<div class="ic" style="left:369px;top:471px;width:18px;height:18px"><svg viewBox="0 0 18 18" preserveAspectRatio="none"><rect width="18" height="18" fill="#4b4fd8"/><text x="9" y="14" font-family="Liberation Sans,sans-serif" font-size="13.500" font-weight="bold" text-anchor="middle" fill="#fff">У</text></svg></div>
<div class="ic" style="left:400px;top:471px;width:19px;height:18px"><svg viewBox="0 0 19 18" preserveAspectRatio="none"><path d="M0 1.500A1.500 1.500 0 0 1 1.500 0H8.500l10 9.500a1.500 1.500 0 0 1 0 2L13 17.500a1.500 1.500 0 0 1-2 0L0 7.500z" fill="#ff9a1a"/><circle cx="4.200" cy="4.200" r="1.500" fill="#fff"/></svg></div>
<div class="ic" style="left:433.3px;top:471.5px;width:14px;height:18px"><svg viewBox="0 0 14 18" preserveAspectRatio="none"><rect width="14" height="18" rx="1.800" fill="#6a6a6a"/><rect x="2.200" y="2.200" width="9.600" height="3.600" fill="#fff"/><g fill="#fff"><rect x="2.200" y="8" width="2.200" height="2"/><rect x="5.900" y="8" width="2.200" height="2"/><rect x="9.600" y="8" width="2.200" height="2"/><rect x="2.200" y="11.200" width="2.200" height="2"/><rect x="5.900" y="11.200" width="2.200" height="2"/><rect x="9.600" y="11.200" width="2.200" height="2"/><rect x="2.200" y="14.400" width="2.200" height="2"/><rect x="5.900" y="14.400" width="2.200" height="2"/><rect x="9.600" y="14.400" width="2.200" height="2"/></g></svg></div>
<div class="ic" style="left:462px;top:473px;width:19px;height:16px"><svg viewBox="0 0 19 16" preserveAspectRatio="none"><text x="10" y="15.200" font-family="Liberation Sans,sans-serif" font-size="19.500" font-weight="bold" text-anchor="middle" fill="#f52a2a">№</text></svg></div>
<div class="ic" style="left:492.4px;top:470.5px;width:19px;height:19px"><svg viewBox="0 0 19 19" preserveAspectRatio="none"><rect x="1.200" y="1.200" width="16.600" height="16.600" fill="#ffd21f" stroke="#222" stroke-width="1.600" stroke-dasharray="3.800 2.400"/><path d="M4.800 9.500l3.400 3.400 6.200-6.400" fill="none" stroke="#222" stroke-width="2"/></svg></div>
<div class="ic" style="left:524.5px;top:471px;width:17px;height:18px"><svg viewBox="0 0 17 18" preserveAspectRatio="none"><path d="M12.500 7V5L8.500 .600H.600v16.800h11.900V13" fill="none" stroke="#333" stroke-width="1.200"/><path d="M8.500 .600V5h4" fill="none" stroke="#333" stroke-width="1.200"/><path d="M16.500 10H6M9 7l-3 3 3 3" fill="none" stroke="#333" stroke-width="1.200"/></svg></div>
<div class="ic" style="left:555px;top:471.5px;width:18px;height:17px"><svg viewBox="0 0 18 17" preserveAspectRatio="none"><rect width="18" height="17" fill="#ff9a1a"/><text x="9" y="13.500" font-family="Liberation Sans,sans-serif" font-size="11.500" text-anchor="middle" fill="#fff" letter-spacing="-.6">P-p</text></svg></div>
<div class="ic" style="left:586.5px;top:473.3px;width:17px;height:13px"><svg viewBox="0 0 17 13" preserveAspectRatio="none"><g fill="#5a55d6"><rect x="0" width="1.300" height="13"/><rect x="2.300" width="1" height="13"/><rect x="4.300" width="1.800" height="13"/><rect x="7.100" width="1" height="13"/><rect x="9.100" width="1.300" height="13"/><rect x="11.400" width="1" height="13"/><rect x="13.400" width="1.600" height="13"/><rect x="16" width="1" height="13"/></g></svg></div>
<div class="ic" style="left:617px;top:471px;width:18px;height:18px"><svg viewBox="0 0 18 18" preserveAspectRatio="none"><rect x=".5" y=".5" width="17" height="17" fill="#ebebeb" stroke="#c4c4c4"/><path d="M6 2.500l3.400 4.300H7.100V15H4.900V6.800H2.600z" fill="#0a6cf5"/><path d="M12 15.500l3.400-4.300h-2.300V3h-2.200v8.200H8.600z" fill="#f03030"/></svg></div>
<div class="ic" style="left:644.6px;top:471.3px;width:18.5px;height:17.5px"><svg viewBox="0 0 18.5 17.5" preserveAspectRatio="none"><rect x="0" y="4.500" width="18.500" height="4.500" fill="#2ebd4e"/><rect x="1.500" y="10" width="15.500" height="7.500" fill="#2ebd4e"/><rect x="8.300" y="4.500" width="1.900" height="13" fill="#f0f0f0"/><path d="M9.250 4.300C7 4.300 4.500 3.500 5 1.600s3.700-.6 4.250 2.700C9.800 1 12.900-.3 13.500 1.600S11.500 4.300 9.250 4.300z" fill="none" stroke="#2ebd4e" stroke-width="1.400"/></svg></div>
<svg style="position:absolute;left:252.5px;top:479.0px" width="6" height="3" viewBox="0 0 6 3"><path d="M0 0h6L3 3z" fill="#111"/></svg>
<svg style="position:absolute;left:664.3px;top:479.0px" width="6" height="3" viewBox="0 0 6 3"><path d="M0 0h6L3 3z" fill="#111"/></svg>
<div style="left:124px;top:473px;width:1px;height:14px;background:#9a9a9a"></div>
<div style="left:293px;top:473px;width:1px;height:14px;background:#9a9a9a"></div>
<div class="in" style="left:674px;top:469px;width:216px;height:22px;"></div>
<svg style="position:absolute;left:874px;top:476.5px" width="10" height="8" viewBox="-5 -4 10 8"><path d="M-3.700 -1.700L0 2L3.700 -1.700" stroke="#111" stroke-width="1.500" fill="none"/></svg>
<div class="t" style="left:677px;top:473px;letter-spacing:.1px">[У порядку введення (прямий)]</div>
<div style="left:8px;top:495px;width:1106px;height:213px;background:#fff;border:1px solid #a3a3a3;border-right-color:#cfcfcf;border-bottom-color:#cfcfcf"></div>
<div style="left:10px;top:496px;width:1103px;height:36px;background:#f0f0f0"></div>
<div class="hl" style="left:9px;top:532px;width:1104px;height:1px;"></div>
<div style="left:330px;top:496px;width:1px;height:192px;background:linear-gradient(#b9b9b9 0,#b9b9b9 120px,#fff 190px)"></div>
<div style="left:474px;top:496px;width:1px;height:192px;background:linear-gradient(#b9b9b9 0,#b9b9b9 120px,#fff 190px)"></div>
<div style="left:544px;top:496px;width:1px;height:192px;background:linear-gradient(#b9b9b9 0,#b9b9b9 120px,#fff 190px)"></div>
<div style="left:648px;top:496px;width:1px;height:192px;background:linear-gradient(#b9b9b9 0,#b9b9b9 120px,#fff 190px)"></div>
<div style="left:751px;top:496px;width:1px;height:192px;background:linear-gradient(#b9b9b9 0,#b9b9b9 120px,#fff 190px)"></div>
<div style="left:803px;top:496px;width:1px;height:192px;background:linear-gradient(#b9b9b9 0,#b9b9b9 120px,#fff 190px)"></div>
<div style="left:852px;top:496px;width:1px;height:192px;background:linear-gradient(#b9b9b9 0,#b9b9b9 120px,#fff 190px)"></div>
<div style="left:929px;top:496px;width:1px;height:192px;background:linear-gradient(#b9b9b9 0,#b9b9b9 120px,#fff 190px)"></div>
<div style="left:987px;top:496px;width:1px;height:192px;background:linear-gradient(#b9b9b9 0,#b9b9b9 120px,#fff 190px)"></div>
<div style="left:1099px;top:496px;width:1px;height:192px;background:linear-gradient(#b9b9b9 0,#b9b9b9 120px,#fff 190px)"></div>
<div class="hl" style="left:9px;top:555px;width:1104px;height:1px;"></div>
<div style="left:331px;top:533px;width:782px;height:22px;background:#ffffd2"></div>
<div style="left:10px;top:533px;width:320px;height:22px;background:linear-gradient(#9ac7fd,#5ca5f7)"></div>
<div class="vl" style="left:474px;top:533px;width:1px;height:22px;"></div>
<div class="vl" style="left:544px;top:533px;width:1px;height:22px;"></div>
<div class="vl" style="left:648px;top:533px;width:1px;height:22px;"></div>
<div class="vl" style="left:751px;top:533px;width:1px;height:22px;"></div>
<div class="vl" style="left:803px;top:533px;width:1px;height:22px;"></div>
<div class="vl" style="left:852px;top:533px;width:1px;height:22px;"></div>
<div class="vl" style="left:929px;top:533px;width:1px;height:22px;"></div>
<div class="vl" style="left:987px;top:533px;width:1px;height:22px;"></div>
<div class="vl" style="left:1099px;top:533px;width:1px;height:22px;"></div>
<div class="gh" style="left:12.5px;top:509px;font-weight:bold;letter-spacing:.55px;">Назва товару</div>
<div class="gh" style="left:333.5px;top:509px;">Штрих-код</div>
<div class="gh" style="right:844px;top:509px;">Кількість</div>
<div class="gh" style="right:740px;top:509px;">Ціна</div>
<div class="gh" style="right:637px;top:509px;">Сума</div>
<div class="gh" style="left:754.5px;top:509px;">Артикул</div>
<div class="gh" style="left:804px;width:48px;height:28px;overflow:hidden;top:502px"><div style="right:1px;top:0;text-align:right;position:absolute">Бонуси<br>нараховані</div></div>
<div class="gh" style="left:855.5px;top:509px;">Вид знижки</div>
<div class="gh" style="right:401px;top:509px;">% знижки</div>
<div class="gh" style="right:289px;top:509px;">Оплачено бонусами</div>
<div class="ic" style="left:13px;top:535px;width:18px;height:18px"><svg viewBox="0 0 18 18" preserveAspectRatio="none"><rect width="18" height="18" fill="#0a7cff"/><path d="M9 3.500l5 5.500h-3.200v5.500H7.200V9H4z" fill="#fff"/></svg></div>
<div class="ic" style="left:37px;top:536px;width:18px;height:16px"><svg viewBox="0 0 18 16" preserveAspectRatio="none"><path d="M0 2.500h4.500L6 .300h6L13.500 2.500H18V16H0z" fill="#666"/><circle cx="9" cy="9.200" r="3.600" fill="none" stroke="#dbe9fb" stroke-width="1.400" stroke-dasharray="1.600 .700"/></svg></div>
<div class="ic" style="left:61px;top:537px;width:18px;height:15px"><svg viewBox="0 0 18 15" preserveAspectRatio="none"><path d="M0 0h18v15H0z" fill="#8c8c8c"/><path d="M3 0h12v3.300l-1.300 1.400H4.300L3 3.300z" fill="#0a7cff"/><rect x="3" y="9.500" width="12" height="3.600" fill="#4f9dff"/><rect x="4" y="10.800" width="1.200" height="1.200" fill="#0a5ce0"/></svg></div>
<div class="g" style="left:87.500px;top:538px;color:#fff;letter-spacing:.1px">Джинси 44555991 Китай XL(р)</div>
<div class="g" style="left:335.500px;top:538px">2949550031318</div>
<div class="g" style="right:846px;top:538px">1</div>
<div class="g" style="right:742px;top:538px">1 600,50</div>
<div class="g" style="right:639px;top:538px">1 600,50</div>
<div class="g" style="left:756.500px;top:538px">44555...</div>
<div class="g" style="left:857.500px;top:538px">накопичува...</div>
<div class="g" style="right:403px;top:538px">3%</div>
<div style="left:9px;top:690px;width:1104px;height:17px;background:#fff"></div>
<div style="left:27px;top:692px;width:662px;height:14px;background:#c1c1c1;border-radius:2px"></div>
<svg style="position:absolute;left:15px;top:694px" width="6" height="9" viewBox="0 0 6 9"><path d="M4.500 1L1.500 4.500L4.500 8" stroke="#444" stroke-width="1.500" fill="none"/></svg>
<svg style="position:absolute;left:1102px;top:694px" width="6" height="9" viewBox="0 0 6 9"><path d="M1.500 1L4.500 4.500L1.500 8" stroke="#444" stroke-width="1.500" fill="none"/></svg>
<div class="sb" style="left:11px;top:712px;width:80px;height:23px;line-height:25.5px"><b>Артикулів</b> 1</div>
<div class="sb" style="left:94px;top:712px;width:91px;height:23px;line-height:25.5px"><b>Кількість</b> 1,00</div>
<div class="sb" style="left:188px;top:712px;width:87px;height:23px;line-height:25.5px"><b>Сума</b> 1 600,50</div>
<div class="sb" style="left:278px;top:712px;width:142px;height:23px;line-height:25.5px"><b>Сума у валюті</b> 1 600,50</div>
<div class="sb" style="left:423px;top:712px;width:71px;height:23px;line-height:25.5px"><b>Сума міри</b> </div>
<div style="left:0px;top:748px;width:1384px;height:1px;background:#d4d4d4"></div>
<div style="left:338px;top:749px;width:120px;height:1px;background:#1a1a1a"></div>
<div style="left:338px;top:749px;width:9px;height:1px;background:#f2c230"></div>
<div style="left:449px;top:749px;width:9px;height:1px;background:#f2c230"></div>
<div style="left:1384px;top:0px;width:2px;height:750px;background:#f4f4f4"></div>
<div style="left:1384px;top:30px;width:1px;height:718px;background:#dddddd"></div>
<div style="left:1115px;top:448px;width:2px;height:290px;background:#c3c3c3"></div>
<div style="left:1121px;top:484px;width:251px;height:1px;background:#a6a6a6"></div>
<div class="tab" style="left:1202px;top:460px;width:87px;height:25px;"></div>
<div class="ic" style="left:1211px;top:463px;width:18px;height:18px"><svg viewBox="0 0 18 18" preserveAspectRatio="none"><rect width="18" height="18" rx="1" fill="#2ebd4e"/><path d="M14.500 6V4h-11v10h11v-2" fill="none" stroke="#fff" stroke-width="1.700"/><rect x="9" y="6.500" width="6.500" height="5" fill="#2ebd4e" stroke="#fff" stroke-width="1.500"/><circle cx="11.500" cy="9" r=".9" fill="#fff"/></svg></div>
<div class="tt" style="left:1235px;top:465px;letter-spacing:-.36px">Витрати</div>
<div class="taba" style="left:1121px;top:460px;width:82px;height:25px;"></div>
<div class="ic" style="left:1128px;top:464px;width:20px;height:16px"><svg viewBox="0 0 20 16" preserveAspectRatio="none"><rect x="1" y="1" width="18" height="14" fill="none" stroke="#2ebd4e" stroke-width="2"/><rect x="3.800" y="4" width="1.900" height="8" fill="#2ebd4e"/><rect x="7.500" y="4.800" width="2.700" height="6.400" fill="none" stroke="#2ebd4e" stroke-width="1.700"/><rect x="12.600" y="4.800" width="2.700" height="6.400" fill="none" stroke="#2ebd4e" stroke-width="1.700"/></svg></div>
<div class="tt" style="left:1153px;top:465px;color:#000;letter-spacing:-.41px">Оплати</div>
<div class="lb" style="left:1155px;top:486px;letter-spacing:.2px">Оплата за видатковою накладною</div>
<div class="in" style="left:1121px;top:503px;width:106px;height:26px;"></div>
<svg style="position:absolute;left:1184.9px;top:511.19999999999993px" width="11.2" height="11.2" viewBox="-5.6 -5.6 11.2 11.2"><path d="M-4.6 -4.6L4.6 4.6M4.6 -4.6L-4.6 4.6" stroke="#1a1a1a" stroke-width="1.25" fill="none"/></svg>
<div class="ic" style="left:1205.5px;top:510.5px;width:12px;height:12px"><svg viewBox="0 0 12 12" preserveAspectRatio="none"><circle cx="5" cy="5" r="4.200" fill="none" stroke="#111" stroke-width="1.350"/><path d="M8.100 8.100L11.500 11.500" stroke="#111" stroke-width="1.650"/></svg></div>
<svg style="position:absolute;left:1217.6px;top:516.0px" width="6" height="3" viewBox="0 0 6 3"><path d="M0 0h6L3 3z" fill="#111"/></svg>
<div style="left:1237px;top:509.5px;width:1px;height:14px;background:#9a9a9a"></div>
<div style="left:1346px;top:509.5px;width:1px;height:14px;background:#9a9a9a"></div>
<div class="ic" style="left:1255px;top:506.6px;width:16px;height:18px"><svg viewBox="0 0 16 18" preserveAspectRatio="none"><path d="M0 3.200h16M5 .600h6" fill="none" stroke="#f53b30" stroke-width="1.200"/><path d="M2.200 3.500v13.900h11.600V3.500" fill="none" stroke="#f53b30" stroke-width="1.200"/><path d="M6.400 6.500v8M9.600 6.500v8" stroke="#f53b30" stroke-width="1.200"/></svg></div>
<div class="ic" style="left:1290px;top:508.3px;width:16.5px;height:16px"><svg viewBox="0 0 16.5 16" preserveAspectRatio="none"><path d="M1.200 7A7 7 0 0 1 14.600 5.200" fill="none" stroke="#0a7cff" stroke-width="1.350"/><path d="M15.300 .8v4.700h-4.700" fill="none" stroke="#0a7cff" stroke-width="1.350"/><path d="M15.300 9A7 7 0 0 1 1.900 10.800" fill="none" stroke="#0a7cff" stroke-width="1.350"/><path d="M1.200 15.200v-4.700h4.700" fill="none" stroke="#0a7cff" stroke-width="1.350"/></svg></div>
<div class="ic" style="left:1319.8px;top:508.3px;width:16.5px;height:16px"><svg viewBox="0 0 16.5 16" preserveAspectRatio="none"><path d="M5 .700A4.600 4.600 0 0 0 .9 6.800c.8 2 3 3 5 2.500l6.300 6c1.300 1.200 3.400-.7 2.200-2.100L8.700 7.300c.6-2.100-.3-4.200-2.100-5.200l.9 2.900-2.300 1.800-2.300-1.800z" fill="none" stroke="#222" stroke-width="1.150" stroke-linejoin="round"/></svg></div>
<div style="left:1359px;top:509px;width:12px;height:15px;overflow:hidden"><div class="ic" style="left:0;top:0;width:20px;height:15px"><svg viewBox="0 0 20 15" preserveAspectRatio="none"><ellipse cx="8" cy="6.200" rx="8" ry="6.200" fill="#8a8a8a"/><path d="M2.500 9.500l-.8 4.500 5-2.500z" fill="#8a8a8a"/><circle cx="4.600" cy="6.200" r="1.050" fill="#fff"/><circle cx="8" cy="6.200" r="1.050" fill="#fff"/><circle cx="11.400" cy="6.200" r="1.050" fill="#fff"/><path d="M10 13.200c3 .9 6.500-.2 7.800-3M18.500 14.500l-2-2.200" fill="none" stroke="#8a8a8a" stroke-width="1.300"/></svg></div></div>
<div style="left:1121px;top:532px;width:250px;height:130px;background:#fff;border:1px solid #a9a9a9"></div>
<div style="left:1123px;top:533px;width:247px;height:35px;background:#f0f0f0"></div>
<div class="hl" style="left:1122px;top:568px;width:248px;height:1px;"></div>
<div class="hl" style="left:1122px;top:591px;width:248px;height:1px;"></div>
<div class="vl" style="left:1233px;top:533px;width:1px;height:58px;"></div>
<div class="vl" style="left:1316px;top:533px;width:1px;height:58px;"></div>
<div class="gh" style="left:1125.500px;top:545px">Дата</div>
<div class="gh" style="right:72px;top:545px">Сума</div>
<div class="gh" style="left:1319px;top:545px;font-weight:bold;letter-spacing:.5px">Каса</div>
<div style="left:1123px;top:569px;width:110px;height:22px;background:#808080"></div>
<div style="left:1140px;top:645px;width:100px;height:14px;background:#c1c1c1;border-radius:2px"></div>
<svg style="position:absolute;left:1128px;top:647.5px" width="6" height="9" viewBox="0 0 6 9"><path d="M4.500 1L1.500 4.500L4.500 8" stroke="#444" stroke-width="1.500" fill="none"/></svg>
<svg style="position:absolute;left:1357.5px;top:647.5px" width="6" height="9" viewBox="0 0 6 9"><path d="M1.500 1L4.500 4.500L1.500 8" stroke="#444" stroke-width="1.500" fill="none"/></svg>
<div style="left:1123px;top:664px;width:178px;height:24px;background:#e3e3e5"></div>
<div class="sb" style="left:1125px;top:664px;background:none;line-height:26.500px"><b>Разом</b></div>
<div style="left:1121px;top:691px;width:251px;height:3px;background:#c3c3c3"></div>
<div style="left:1121px;top:694px;width:250px;height:41px;background:#fff;border:1px solid #a9a9a9"></div>
<div style="left:1162px;top:566px;width:200px;height:160px;background:#f0f0f0;border:1px solid #fafafa;border-right-color:#a0a0a0;border-bottom-color:#a0a0a0"></div>
<div style="left:1165px;top:574px;width:191px;height:1px;background:#dadada"></div>
<div class="t" style="left:1172px;top:566px;background:#f0f0f0;padding:0 3px;letter-spacing:.2px">Фото (Ctrl+H)</div>
<div style="left:1340px;top:567px;width:16px;height:14px;background:#fff;border:1px solid #adadad;border-radius:2px"></div>
<div style="left:1346px;top:573.5px;width:5px;height:1px;background:#000"></div>
<svg style="position:absolute;left:1208px;top:582px" width="108" height="142" viewBox="0 0 108 142"><defs><linearGradient id="pf" x1="0" y1="0" x2="0" y2="1"><stop offset="0" stop-color="#efefef"/><stop offset="1" stop-color="#f6f6f6"/></linearGradient><linearGradient id="pw" x1="0" y1="0" x2="0" y2="1"><stop offset="0" stop-color="#d8d9dc"/><stop offset="1" stop-color="#e6e7e9"/></linearGradient><filter id="pn" color-interpolation-filters="sRGB" x="0" y="0" width="100%" height="100%"><feTurbulence type="fractalNoise" baseFrequency=".7" numOctaves="2" seed="3" result="n"/><feColorMatrix in="n" type="matrix" values="0 0 0 0 .40  0 0 0 0 .52  0 0 0 0 .72  2 0 0 0 -.75" result="m"/><feComposite in="m" in2="SourceGraphic" operator="in" result="o"/><feMerge><feMergeNode in="SourceGraphic"/><feMergeNode in="o"/></feMerge></filter></defs><rect width="108" height="91" fill="url(#pw)"/><path d="M0 90L108 87.500V142H0z" fill="url(#pf)"/><path d="M33 0h50l-12 4-6 5H33z" fill="#f8f8f8"/><path d="M45 0h9l-1 4 1 4h-5l-2-4z" fill="#ee6fb5"/><path d="M26 0h7v9l-.800 40-3 1-2.500-8-1-14z" fill="#e2b49c"/><path d="M37.500 109h5l-.5 9h-4z M65.500 108h5l-.5 9h-4z" fill="#dcae98"/><g filter="url(#pn)"><path d="M33 9h36l2 29 2.700 36 1.300 35-11.500.500-3-35.500L52 40l-4.700 34L45 110.500l-9-.500-2-36-2.300-36z" fill="#33528a"/></g><path d="M51 38l1 2-4 34-3 36h-2.500l3-36z M69.500 12l1.500 26 2.700 36 1.300 35h-2.500l-2-35z" fill="#2a4676" opacity=".55"/><path d="M33 9h36v2.500H33z" fill="#2f4b7c" opacity=".6"/><path d="M85 0L72 2.500 62 8l-6 3.500 .500 6.500 7 1.500 5-9L85 2.500z" fill="#e2b49c"/><path d="M26 127c2-5 8-9 12-10l5 .500 3 9c-4 3-12 6-19 6z M62.500 127l2-10 5.500 0 3.500 10c-2 6-10 7-11 2z" fill="#fcfcfc"/><path d="M26.500 131.500c7 0 14-2.500 19-5.500M62.500 130c2 3 8 2 11-2" fill="none" stroke="#d8d8d8" stroke-width=".8"/></svg>

<div class="ic" style="left:1334.8px;top:582.5px;width:24px;height:24px"><svg viewBox="0 0 25 25" preserveAspectRatio="none"><circle cx="12.500" cy="12.500" r="12" fill="#3cb54a" stroke="#a5dca9" stroke-width="1"/><path d="M6.500 13l4 4.200 8-8.700" fill="none" stroke="#fff" stroke-width="2.800"/></svg></div>
<div style="left:1060px;top:239px;width:314px;height:71.5px;background:#f2f2f2;box-shadow:2px 2px 3px rgba(0,0,0,.55)"></div>
<div class="ic" style="left:1068px;top:240.8px;width:20px;height:20.5px"><svg viewBox="0 0 20 20.5" preserveAspectRatio="none"><path d="M10 0l3.600 3.900h-2.100V6.300h-3V3.900H6.400z M10 14.200l3.600-3.900h-2.100V8.800h-3v1.500H6.400z M1.300 7.100L5.400 3.500v7.200z M18.700 7.100L14.600 3.500v7.200z" fill="#e8262c"/><path d="M.5 10.800L10 16.300l9.500-5.500M.5 13.800L10 19.300l9.500-5.500" fill="none" stroke="#e8262c" stroke-width="1.100"/></svg></div>
<div class="t" style="left:1096px;top:243.5px;font-size:12px;letter-spacing:-.15px;letter-spacing:-.44px">Реєстри ТТН</div>
<div class="ic" style="left:1068.5px;top:263.3px;width:20px;height:19px"><svg viewBox="0 0 20 19" preserveAspectRatio="none"><path d="M9 0l3.600 4h-2.200V7.300h-2.800V4H5.400z M9 17.500l3.600-4h-2.200V10.200h-2.800v3.300H5.400z M0 8.700L4 5v7.400z M18 8.700L14 5v7.400z" fill="#f02a2a"/><circle cx="15.600" cy="14" r="3.300" fill="#f2f2f2" stroke="#555" stroke-width=".9"/><path d="M18 16.400l2.400 2.400" stroke="#555" stroke-width="1.100"/></svg></div>
<div class="t" style="left:1096px;top:264.5px;font-size:12px;letter-spacing:-.15px">Відстежування ТТН Нової пошти</div>
<div class="t" style="left:1293px;top:264.5px;font-size:12px;letter-spacing:-.15px;letter-spacing:.15px">Shift+Ctrl+T</div>
<div class="ic" style="left:1070.3px;top:285px;width:15.4px;height:18.3px"><svg viewBox="0 0 16 18" preserveAspectRatio="none"><path d="M0 3.200h16M5 .600h6" fill="none" stroke="#f53b30" stroke-width="1.200"/><path d="M2.200 3.500v13.900h11.600V3.500" fill="none" stroke="#f53b30" stroke-width="1.200"/><path d="M6.400 6.500v8M9.600 6.500v8" stroke="#f53b30" stroke-width="1.200"/></svg></div>
<div class="t" style="left:1096px;top:286.5px;font-size:12px;letter-spacing:-.15px">Видалення ТТН Нової пошти</div>
<div style="left:1056px;top:234px;width:147px;height:31px;border:3.400px solid #f50a0a;border-radius:2px"></div>
<svg style="position:absolute;left:990px;top:135px" width="90" height="90" viewBox="990 135 90 90"><path d="M1000 145L1051.500 203" stroke="#fb0d0d" stroke-width="2.900" stroke-linecap="round"/><path d="M1059.700 211.400L1045.800 204.200L1055 197.900z" fill="#fb0d0d"/></svg>
</div></body></html>
